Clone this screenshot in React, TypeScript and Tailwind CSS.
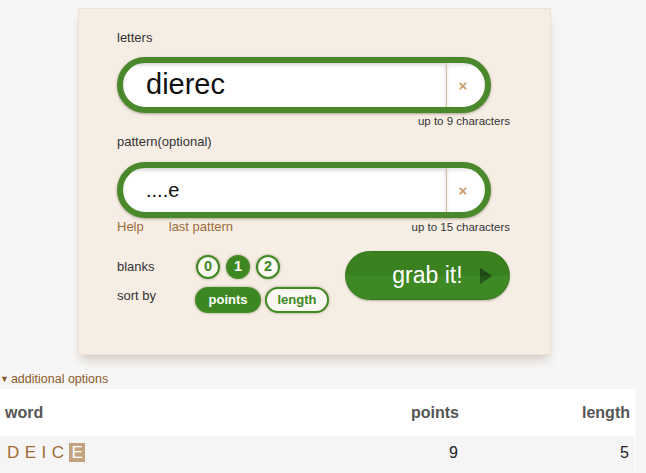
import React from "react";

const font = "font-['Liberation_Sans',Arial,Helvetica,sans-serif]";

const WordInput = ({ value, size }: { value: string; size: string }) => (
  <div className="flex h-[56px] w-[374px] overflow-hidden rounded-full border-[6px] border-[#4a892b] bg-white shadow-[0_1px_3px_rgba(60,40,20,0.4)]">
    <div className={`flex flex-1 items-center pl-[23px] text-[#111] shadow-[inset_0_2px_4px_rgba(0,0,0,0.18)] ${size}`}>
      {value}
    </div>
    <div className="flex w-[39px] items-center border-l border-[#dcbc9a] pr-[6px] shadow-[inset_0_2px_4px_rgba(0,0,0,0.12)]">
      <span className="w-full text-center text-[15px] font-bold leading-none text-[#c99b6c]">×</span>
    </div>
  </div>
);

const Chip = ({ label, on, className }: { label: string; on?: boolean; className: string }) => (
  <div
    className={`flex items-center justify-center rounded-full border-2 border-[#3f8a23] font-bold shadow-[0_0_3px_rgba(80,60,20,0.45)] ${
      on ? "bg-[#3d8722] text-white" : "bg-[#fbf8f2] text-[#3d8722]"
    } ${className}`}
  >
    {label}
  </div>
);

export default function App() {
  return (
    <div className={`min-h-screen bg-[#f6f6f6] pt-[8px] ${font}`}>
      <div className="ml-[78px] h-[347px] w-[473px] border border-[#ebe1d5] bg-[#f6eee5] pl-[38px] pt-[21px] shadow-[0_7px_10px_-3px_rgba(120,85,50,0.3)]">
        <div className="w-[393px]">
          <div className="text-[13px] leading-[16px] text-[#333]">letters</div>
          <div className="mt-[11px]">
            <WordInput value="dierec" size="text-[29px]" />
          </div>
          <div className="mt-[1px] text-right text-[11.5px] leading-[14px] text-[#333]">up to 9 characters</div>
          <div className="mt-[6px] text-[13px] leading-[16px] text-[#333]">pattern(optional)</div>
          <div className="mt-[12px]">
            <WordInput value="....e" size="text-[20px]" />
          </div>
          <div className="mt-[1px] flex items-center text-[13px] leading-[16px]">
            <span className="text-[#9a6a3b]">Help</span>
            <span className="ml-[25px] text-[#9a6a3b]">last pattern</span>
            <span className="ml-auto text-[11.5px] text-[#333]">up to 15 characters</span>
          </div>

          <div className="mt-[20px] flex justify-between">
            <div className="flex flex-col gap-[8px]">
              <div className="flex items-center">
                <span className="w-[79px] text-[13px] leading-[16px] text-[#333]">blanks</span>
                <div className="flex gap-[6px]">
                  <Chip label="0" className="h-[24px] w-[24px] text-[14.5px]" />
                  <Chip label="1" on className="h-[24px] w-[24px] text-[14.5px]" />
                  <Chip label="2" className="h-[24px] w-[24px] text-[14.5px]" />
                </div>
              </div>
              <div className="flex items-start">
                <span className="w-[78px] pt-[1px] text-[13px] leading-[16px] text-[#333]">sort by</span>
                <div className="flex gap-[4px]">
                  <Chip label="points" on className="h-[26px] w-[66px] text-[13px]" />
                  <Chip label="length" className="h-[26px] w-[64px] text-[13px]" />
                </div>
              </div>
            </div>

            <button
              type="button"
              className="relative -mt-[4px] flex h-[49px] w-[165px] items-center justify-center rounded-full border border-[#33761b] bg-[linear-gradient(#3a8120_0%,#398020_48%,#3e8a24_52%,#3c8722_100%)] text-[23px] text-white shadow-[0_1px_2px_rgba(60,40,20,0.3)]"
            >
              grab it!
              <svg className="absolute right-[17px] top-[16px]" width="12" height="16" viewBox="0 0 12 16">
                <polygon points="0,0 12,8 0,16" fill="#24561a" />
                <polygon points="0,0 12,8 0,8" fill="#1f4a16" />
              </svg>
            </button>
          </div>
        </div>
      </div>

      <div className="mt-[16px] flex items-center text-[12.5px] leading-[16px] text-[#8b5a2b]">
        <span className="text-[9px]">▼</span>
        <span className="ml-[2px]">additional options</span>
      </div>

      <div className="mt-[2px] w-[635px]">
        <div className="grid h-[47px] grid-cols-[1fr_90px_176px] items-center bg-white text-[16px] font-bold text-[#555]">
          <span className="pl-[5px]">word</span>
          <span className="text-right">points</span>
          <span className="pr-[5px] text-right">length</span>
        </div>
        <div className="grid h-[34px] grid-cols-[1fr_90px_176px] items-center border-r border-white bg-[#f5f5f5] text-[16px] text-[#222]">
          <span className="pl-[7px] text-[17px] tracking-[0.32em] text-[#9e6a36]">
            DEIC
            <span className="bg-[#c2a27f] px-[2px] tracking-normal text-white">E</span>
          </span>
          <span className="text-right">9</span>
          <span className="pr-[5px] text-right">5</span>
        </div>
      </div>
    </div>
  );
}
